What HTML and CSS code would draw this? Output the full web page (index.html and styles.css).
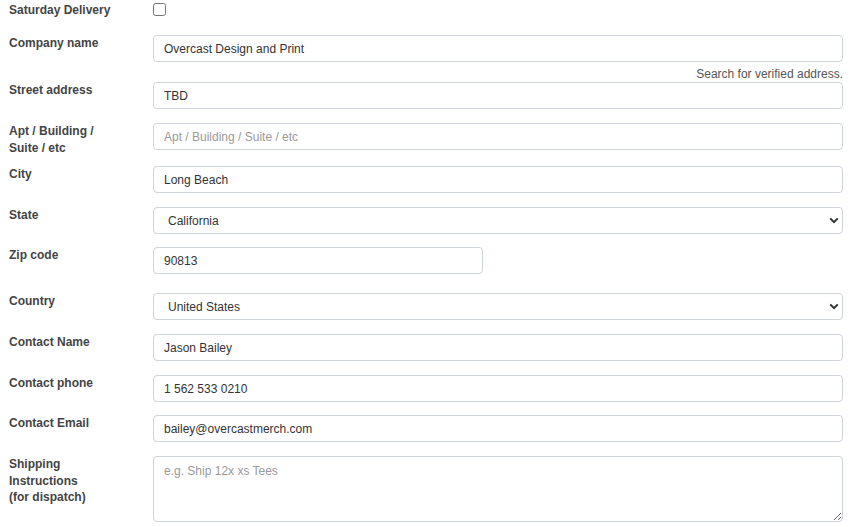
FILE: index.html
```html
<!DOCTYPE html>
<html lang="en">
<head>
<meta charset="utf-8">
<title>Shipping form</title>
<link rel="stylesheet" href="styles.css">
</head>
<body>
<form class="form">
  <div class="row row--check">
    <label class="label" for="sat">Saturday Delivery</label>
    <div class="field"><input type="checkbox" id="sat" class="check"></div>
  </div>
  <div class="row row--help">
    <label class="label" for="company">Company name</label>
    <div class="field">
      <input class="input" id="company" type="text" value="Overcast Design and Print">
      <div class="help">Search for verified address.</div>
    </div>
  </div>
  <div class="row">
    <label class="label" for="street">Street address</label>
    <div class="field"><input class="input" id="street" type="text" value="TBD"></div>
  </div>
  <div class="row row--tall">
    <label class="label" for="apt">Apt / Building /<br>Suite / etc</label>
    <div class="field"><input class="input" id="apt" type="text" placeholder="Apt / Building / Suite / etc"></div>
  </div>
  <div class="row">
    <label class="label" for="city">City</label>
    <div class="field"><input class="input" id="city" type="text" value="Long Beach"></div>
  </div>
  <div class="row row--snug">
    <label class="label" for="state">State</label>
    <div class="field select-wrap">
      <select class="input select" id="state"><option>California</option></select>
      <svg class="chevron" width="10" height="7" viewBox="0 0 10 7"><path d="M1.2 1.4 L5 5.2 L8.8 1.4" fill="none" stroke="#333" stroke-width="2"/></svg>
    </div>
  </div>
  <div class="row row--zip">
    <label class="label" for="zip">Zip code</label>
    <div class="field"><input class="input input--short" id="zip" type="text" value="90813"></div>
  </div>
  <div class="row">
    <label class="label" for="country">Country</label>
    <div class="field select-wrap">
      <select class="input select" id="country"><option>United States</option></select>
      <svg class="chevron" width="10" height="7" viewBox="0 0 10 7"><path d="M1.2 1.4 L5 5.2 L8.8 1.4" fill="none" stroke="#333" stroke-width="2"/></svg>
    </div>
  </div>
  <div class="row">
    <label class="label" for="cname">Contact Name</label>
    <div class="field"><input class="input" id="cname" type="text" value="Jason Bailey"></div>
  </div>
  <div class="row row--snug">
    <label class="label" for="phone">Contact phone</label>
    <div class="field"><input class="input" id="phone" type="text" value="1 562 533 0210"></div>
  </div>
  <div class="row">
    <label class="label" for="email">Contact Email</label>
    <div class="field"><input class="input" id="email" type="text" value="bailey@overcastmerch.com"></div>
  </div>
  <div class="row">
    <label class="label" for="notes">Shipping<br>Instructions<br>(for dispatch)</label>
    <div class="field"><textarea class="input textarea" id="notes" placeholder="e.g. Ship 12x xs Tees"></textarea></div>
  </div>
</form>
</body>
</html>
```

FILE: styles.css
```css
html, body {
  margin: 0;
  padding: 0;
  background: #fff;
}
body {
  font-family: "Liberation Sans", Arial, sans-serif;
  font-size: 12px;
  color: #333;
}
.form {
  padding: 0 12px 0 9px;
}
.row {
  display: flex;
  align-items: flex-start;
  margin-bottom: 14px;
}
.row--check {
  height: 20px;
  align-items: center;
  margin-bottom: 15px;
}
.row--help {
  margin-bottom: 0;
}
.row--tall {
  margin-bottom: 10px;
}
.row--snug {
  margin-bottom: 13px;
}
.row--zip {
  margin-bottom: 19px;
}
.label {
  width: 144px;
  flex: 0 0 144px;
  font-weight: bold;
  color: #444;
  line-height: 16.5px;
}
.row--check .label {
  line-height: 16px;
}
.field {
  flex: 1;
  min-width: 0;
}
.check {
  margin: 0;
  width: 13px;
  height: 13px;
  display: block;
  position: relative;
  top: -0.5px;
}
.input {
  display: block;
  box-sizing: border-box;
  width: 100%;
  height: 27px;
  margin: 0;
  padding: 0 10px;
  border: 1px solid #ced4da;
  border-radius: 4px;
  background: #fff;
  font-family: "Liberation Sans", Arial, sans-serif;
  font-size: 12px;
  color: #333;
  outline: none;
}
.input::placeholder {
  color: #9a9a9a;
}
.input--short {
  width: 330px;
}
.help {
  margin-top: 4px;
  text-align: right;
  line-height: 16px;
  color: #555;
}
.select-wrap {
  position: relative;
}
.select {
  appearance: none;
  -webkit-appearance: none;
  padding-left: 14px;
}
.chevron {
  position: absolute;
  right: 4px;
  top: 10px;
  pointer-events: none;
}
.textarea {
  height: 66px;
  padding: 6px 10px;
  line-height: 16px;
  resize: vertical;
}
```
